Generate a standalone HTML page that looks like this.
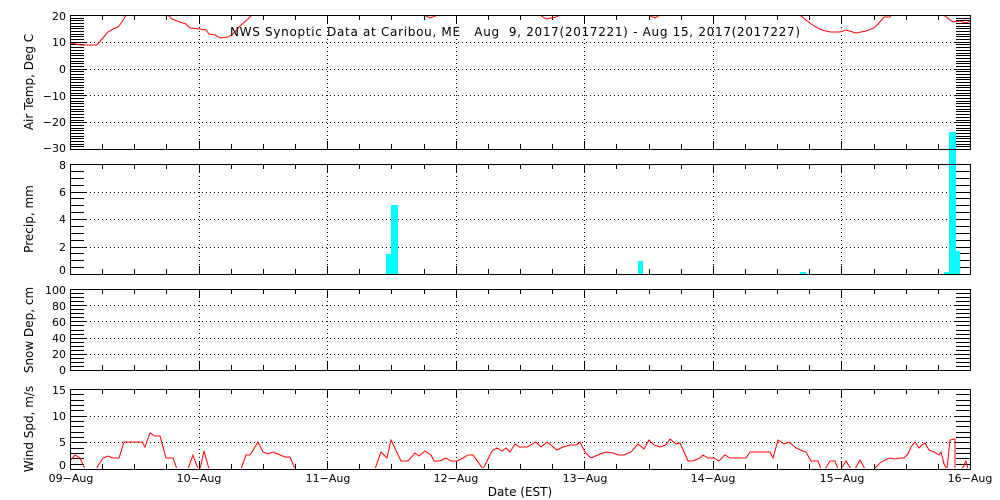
<!DOCTYPE html>
<html><head><meta charset="utf-8"><style>
html,body{margin:0;padding:0;background:#fff;width:1000px;height:500px;overflow:hidden}
svg text{font-family:"DejaVu Sans","Liberation Sans",sans-serif;font-size:11px;fill:#000}
</style></head><body>
<svg id="s" width="1000" height="500" xmlns="http://www.w3.org/2000/svg" shape-rendering="crispEdges">
<defs>
<clipPath id="c1"><rect x="70" y="16" width="900" height="133"/></clipPath>
<clipPath id="c4"><rect x="70" y="389" width="900" height="79"/></clipPath>
</defs>
<g id="grid" stroke="#000" stroke-width="1" stroke-dasharray="1,3" fill="none"></g>
<g id="ticks" stroke="#000" stroke-width="1" fill="none"></g>
<g fill="#00ffff">
<rect x="386" y="254" width="5" height="20"/>
<rect x="391" y="205" width="7" height="69"/>
<rect x="638" y="261" width="5" height="13"/>
<rect x="800" y="272" width="6" height="2"/>
<rect x="944" y="272" width="6" height="2"/>
<rect x="949" y="132" width="7" height="142"/>
<rect x="955" y="251" width="5" height="23"/>
</g>
<g fill="none" stroke="#ff0000" stroke-width="1" shape-rendering="auto">
<polyline clip-path="url(#c1)" points="70,43 76,44 80,45 88,45 97,45 102,39 108,32 113,29 118,27 122,22 126,15 128,10 165,10 168,15 172,19 180,22 186,24 190,28 200,29 206,30 209,34 215,35 220,38 228,37 233,34 240,26 248,19 252,15 254,10 420,10 424,15 430,18 438,15 440,10 535,10 540,15 546,19 556,17 560,15 562,10 645,10 648,15 655,18 660,15 662,10 795,10 800,15 806,20 814,26 822,30 830,32 840,32 846,30 856,33 866,31 874,28 878,24 884,17 890,17 891,15 892,10 940,10 945,16 953,22 960,21 966,23 970,21"/>
<polyline clip-path="url(#c4)" points="70,461 75,455 80,458 85,469 96,469 103,458 108,456 113,458 119,458 124,442 142,442 145,447 150,433 155,436 160,436 166,458 173,458 177,469 188,469 193,455 198,469 200,469 204,451 209,469 241,469 246,455 250,455 258,442 263,452 268,454 273,452 280,455 285,457 290,457 295,469 375,469 381,452 387,458 391,440 401,461 408,461 415,453 419,456 425,451 431,455 434,461 440,461 446,458 451,461 457,461 463,458 468,455 473,455 483,469 492,451 497,448 502,451 506,448 510,452 515,444 520,447 527,447 536,442 541,447 547,442 557,450 563,447 570,445 576,445 580,442 585,452 591,458 600,454 606,452 613,453 618,455 624,455 631,452 638,444 644,449 649,440 654,445 660,447 666,445 670,439 676,444 680,443 685,454 688,461 693,461 700,458 703,455 708,458 714,458 719,461 725,455 730,458 746,458 750,452 770,452 773,458 778,440 784,444 789,442 796,448 803,451 806,452 811,461 818,461 821,469 825,469 830,461 835,461 838,469 841,469 846,461 851,469 855,469 860,460 865,469 874,469 880,463 885,460 890,458 895,459 900,458 904,458 908,454 911,447 915,442 919,448 922,445 925,443 929,450 934,452 939,455 941,452 944,464 947,469 950,440 955,439 955,447 955,469 962,469 966,461 968,469"/>
</g>
<g fill="none" stroke="#000" stroke-width="1">
<rect x="70.5" y="15.5" width="900" height="134"/>
<rect x="70.5" y="164.5" width="900" height="110"/>
<rect x="70.5" y="289.5" width="900" height="81"/>
<rect x="70.5" y="389.5" width="900" height="80"/>
</g>
<text x="230" y="36" style="font-size:12px" textLength="570" lengthAdjust="spacing" xml:space="preserve">NWS Synoptic Data at Caribou, ME   Aug  9, 2017(2017221) - Aug 15, 2017(2017227)</text>
<g text-anchor="end">
<text x="66" y="20">20</text><text x="66" y="46">10</text><text x="66" y="73">0</text><text x="66" y="100">−10</text><text x="66" y="126">−20</text><text x="66" y="152">−30</text>
<text x="66" y="169">8</text><text x="66" y="196">6</text><text x="66" y="223">4</text><text x="66" y="251">2</text><text x="66" y="274">0</text>
<text x="66" y="294">100</text><text x="66" y="310">80</text><text x="66" y="326">60</text><text x="66" y="342">40</text><text x="66" y="358">20</text><text x="66" y="374">0</text>
<text x="66" y="394">15</text><text x="66" y="420">10</text><text x="66" y="446">5</text><text x="66" y="469">0</text>
</g>
<g text-anchor="middle">
<text x="71" y="482">09−Aug</text><text x="199" y="482">10−Aug</text><text x="328" y="482">11−Aug</text><text x="456" y="482">12−Aug</text><text x="585" y="482">13−Aug</text><text x="713" y="482">14−Aug</text><text x="842" y="482">15−Aug</text><text x="970" y="482">16−Aug</text>
<text x="520" y="496" style="font-size:12px">Date (EST)</text>
<text transform="translate(33,82) rotate(-90)" style="font-size:12px">Air Temp, Deg C</text>
<text transform="translate(33,219) rotate(-90)" style="font-size:12px">Precip, mm</text>
<text transform="translate(33,330) rotate(-90)" style="font-size:12px">Snow Dep, cm</text>
<text transform="translate(33,429) rotate(-90)" style="font-size:12px">Wind Spd, m/s</text>
</g>
</svg>
<script>
(function(){
var g=document.getElementById('grid'),t=document.getElementById('ticks'),ns='http://www.w3.org/2000/svg';
function L(p,x1,y1,x2,y2){var l=document.createElementNS(ns,'line');l.setAttribute('x1',x1);l.setAttribute('y1',y1);l.setAttribute('x2',x2);l.setAttribute('y2',y2);p.appendChild(l);}
var P=[[15,149,-30,20,10,1],[164,274,0,8,2,0.5],[289,370,0,100,20,5],[389,469,0,15,5,1]];
var dx=900/7;
P.forEach(function(p){
 var top=p[0],bot=p[1],lo=p[2],hi=p[3],maj=p[4],mn=p[5],s=(bot-top)/(hi-lo);
 for(var d=1;d<7;d++){var x=Math.round(70+d*dx)+0.5;L(g,x,top,x,bot);}
 for(var q=0;q<=28;q++){var x=Math.round(70+q*dx/4)+0.5;var len=(q%4==0)?8:5;L(t,x,top,x,top+len);L(t,x,bot,x,bot-len);}
 for(var v=lo;v<=hi+1e-6;v+=mn){var y=Math.round(bot-(v-lo)*s)+0.5;var isM=Math.abs((v-lo)/maj-Math.round((v-lo)/maj))<1e-6;var len=isM?16:14;
  L(t,70,y,70+len,y);L(t,970,y,970-len,y);
  if(isM&&v>lo&&v<hi)L(g,70,y,970,y);}
});
})();
</script>
</body></html>
